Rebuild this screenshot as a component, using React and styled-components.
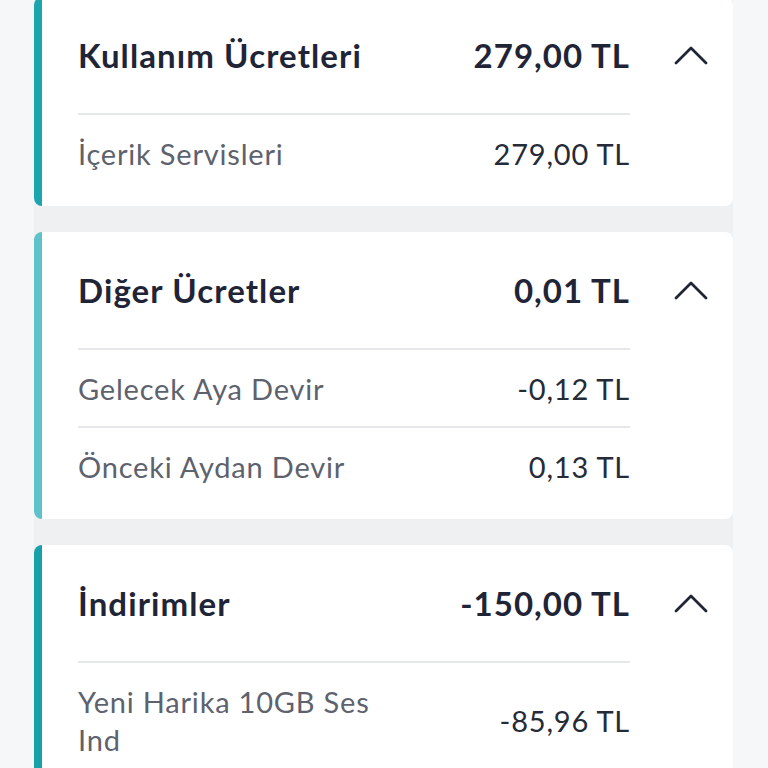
import styled, { createGlobalStyle } from "styled-components"

const GlobalStyle = createGlobalStyle`
  html, body {
    margin: 0;
    padding: 0;
    background: #f6f7f9;
    font-family: Lato, "Noto Sans", sans-serif;
    -webkit-font-smoothing: antialiased;
  }
`

const Page = styled.div`
  padding: 0 35px 0 34px;
  height: 768px;
  overflow: hidden;
`

const CardList = styled.div`
  display: flex;
  flex-direction: column;
  gap: 26px;
  margin-top: -3px;
  background: #eff0f2;
`

const Card = styled.section`
  background: #ffffff;
  border-left: 8px solid ${(props) => props.$accent};
  border-radius: 8px;
  padding: 0 0 15px 36px;
`

const Header = styled.div`
  display: flex;
  align-items: center;
  height: 116px;
  padding-bottom: 4px;
  box-sizing: border-box;
`

const HeaderMain = styled.div`
  flex: 1;
  display: flex;
  justify-content: space-between;
  align-items: center;
  padding-top: 4px;
`

const Title = styled.h2`
  margin: 0;
  font-size: 33px;
  font-weight: 700;
  letter-spacing: 1.1px;
  color: #1f2537;
  line-height: 40px;
`

const Total = styled.span`
  font-size: 33px;
  font-weight: 700;
  letter-spacing: 1px;
  color: #1f2537;
  line-height: 40px;
`

const Toggle = styled.button`
  width: 103px;
  flex-shrink: 0;
  display: flex;
  justify-content: flex-start;
  padding: 4px 0 0 44px;
  border: none;
  background: none;
  cursor: pointer;
`

const Rows = styled.div`
  margin-right: 103px;
`

const Row = styled.div`
  display: flex;
  justify-content: space-between;
  align-items: center;
  border-top: 2px solid #e6e8eb;
  padding: 20px 0 18px;
`

const Label = styled.span`
  max-width: 320px;
  font-size: 29px;
  line-height: 38px;
  letter-spacing: 0.8px;
  color: #5d626d;
`

const Amount = styled.span`
  font-size: 29px;
  line-height: 38px;
  letter-spacing: 0.8px;
  color: #262b38;
  white-space: nowrap;
`

const Chevron = () => (
  <svg width="34" height="20" viewBox="0 0 34 20" fill="none">
    <path
      d="M2 18 L17 3 L32 18"
      stroke="#1f2537"
      strokeWidth="2.8"
      strokeLinecap="round"
      strokeLinejoin="round"
    />
  </svg>
)

const sections = [
  {
    title: "Kullanım Ücretleri",
    total: "279,00 TL",
    accent: "#1ba5af",
    items: [{ label: "İçerik Servisleri", amount: "279,00 TL" }],
  },
  {
    title: "Diğer Ücretler",
    total: "0,01 TL",
    accent: "#5ec2ca",
    items: [
      { label: "Gelecek Aya Devir", amount: "-0,12 TL" },
      { label: "Önceki Aydan Devir", amount: "0,13 TL" },
    ],
  },
  {
    title: "İndirimler",
    total: "-150,00 TL",
    accent: "#16a0a9",
    items: [{ label: "Yeni Harika 10GB Ses Ind", amount: "-85,96 TL" }],
  },
]

function App() {
  return (
    <Page>
      <GlobalStyle />
      <CardList>
        {sections.map((section) => (
          <Card key={section.title} $accent={section.accent}>
            <Header>
              <HeaderMain>
                <Title>{section.title}</Title>
                <Total>{section.total}</Total>
              </HeaderMain>
              <Toggle aria-label="Daralt">
                <Chevron />
              </Toggle>
            </Header>
            <Rows>
              {section.items.map((item) => (
                <Row key={item.label}>
                  <Label>{item.label}</Label>
                  <Amount>{item.amount}</Amount>
                </Row>
              ))}
            </Rows>
          </Card>
        ))}
      </CardList>
    </Page>
  )
}

export default App
